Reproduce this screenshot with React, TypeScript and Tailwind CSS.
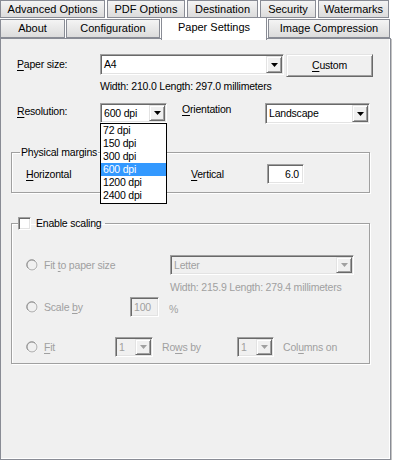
import React from "react";

const sunken =
  "border border-t-[#a0a0a0] border-l-[#a0a0a0] border-b-white border-r-white shadow-[inset_1px_1px_0_#696969,inset_-1px_-1px_0_#e3e3e3]";
const raised =
  "border border-t-[#e3e3e3] border-l-[#e3e3e3] border-b-[#696969] border-r-[#696969] shadow-[inset_1px_1px_0_#fff,inset_-1px_-1px_0_#a0a0a0]";

function Arrow({ disabled }: { disabled?: boolean }) {
  return (
    <div className={`w-[16px] m-[1px] flex items-center justify-center bg-[#f0f0f0] ${raised}`}>
      <svg width="7" height="4" viewBox="0 0 7 4">
        <path d="M0 0h7L3.5 4z" fill={disabled ? "#a0a0a0" : "#000"} />
      </svg>
    </div>
  );
}

function Combo({
  className,
  value,
  disabled,
}: {
  className: string;
  value: string;
  disabled?: boolean;
}) {
  return (
    <div className={`flex ${sunken} ${disabled ? "bg-[#f0f0f0]" : "bg-white"} ${className}`}>
      <div
        className={`flex-1 flex items-center pl-[3px] ${disabled ? "text-[#a0a0a0]" : "text-black"}`}
      >
        {value}
      </div>
      <Arrow disabled={disabled} />
    </div>
  );
}

function U({ children }: { children: React.ReactNode }) {
  return <span className="underline underline-offset-[2px]">{children}</span>;
}

function Radio() {
  return (
    <svg width="12" height="12" viewBox="0 0 12 12" className="shrink-0">
      <circle cx="6" cy="6" r="5.5" fill="#f0f0f0" stroke="#ffffff" />
      <circle cx="6" cy="6" r="5" fill="#f0f0f0" stroke="#a8a8a8" strokeWidth="1" />
      <path d="M2.2 9.2A4.2 4.2 0 0 1 9.2 2.2" fill="none" stroke="#909090" strokeWidth="1" />
    </svg>
  );
}

export default function App() {
  const tab =
    "h-full flex items-center justify-center border border-[#898c95] bg-[linear-gradient(#f4f4f4,#dcdcdc)] text-black";
  return (
    <div className="relative w-[394px] h-[460px] bg-white font-['Liberation_Sans',Arial,sans-serif] text-[11px] leading-[13px] text-black overflow-hidden">
      {/* Tab row 1 */}
      <div className="flex h-[18px] gap-[2px]">
        <div className={`${tab} w-[105px]`}>Advanced Options</div>
        <div className={`${tab} w-[78px]`}>PDF Options</div>
        <div className={`${tab} w-[71px]`}>Destination</div>
        <div className={`${tab} w-[56px]`}>Security</div>
        <div className={`${tab} w-[71px]`}>Watermarks</div>
      </div>
      {/* Tab row 2 */}
      <div className="flex h-[19px] mt-[1px] gap-[1px] items-end relative z-10">
        <div className={`${tab} w-[65px] h-[18px]`}>About</div>
        <div className={`${tab} w-[94px] h-[18px]`}>Configuration</div>
        <div className="w-[106px] h-[23px] mb-[-2px] bg-white border border-b-0 border-[#898c95] flex items-start justify-center pt-[3px] -mt-[4px]">
          Paper Settings
        </div>
        <div className={`${tab} w-[122px] h-[18px]`}>Image Compression</div>
      </div>
      {/* Panel */}
      <div className="w-[391px] h-[422px] bg-[#f0f0f0] border border-[#898c95] shadow-[inset_-1px_-1px_0_#fff,1px_1px_0_#c4c4c4] pt-[15px] text-[10.5px] tracking-[-0.2px]">
        {/* Paper size row */}
        <div className="flex items-start">
          <div className="w-[99px] pl-[16px] pt-[4px]">
            <U>P</U>aper size:
          </div>
          <Combo className="w-[184px] h-[21px]" value="A4" />
          <div className={`ml-[2px] w-[87px] h-[23px] flex items-center justify-center bg-[#f0f0f0] ${raised}`}>
            <U>C</U>ustom
          </div>
        </div>
        <div className="ml-[99px] mt-[3px]">Width: 210.0 Length: 297.0 millimeters</div>
        {/* Resolution row */}
        <div className="flex items-start mt-[10px]">
          <div className="w-[99px] pl-[16px] pt-[2px]">
            <U>R</U>esolution:
          </div>
          <Combo className="w-[67px] h-[20px]" value="600 dpi" />
          <div className="w-[98px] pl-[15px]">
            <U>O</U>rientation
          </div>
          <Combo className="w-[105px] h-[21px]" value="Landscape" />
        </div>
        {/* Physical margins */}
        <fieldset className="ml-[10px] mt-[22px] w-[359px] h-[47px] border border-[#a0a0a0] shadow-[1px_1px_0_#fff,inset_1px_1px_0_#fff] px-[14px]">
          <legend className="px-[1px] ml-[-6px]">Physical margins</legend>
          <div className="flex items-center mt-[5px]">
            <div className="w-[165px]">
              <U>H</U>orizontal
            </div>
            <div className="w-[76px]">
              <U>V</U>ertical
            </div>
            <div className={`w-[37px] h-[20px] bg-white text-right pr-[4px] flex items-center justify-end ${sunken}`}>
              6.0
            </div>
          </div>
        </fieldset>
        {/* Enable scaling */}
        <fieldset className="ml-[10px] mt-[24px] w-[359px] h-[147px] border border-[#a0a0a0] shadow-[1px_1px_0_#fff,inset_1px_1px_0_#fff] text-[#a0a0a0]">
          <legend className="ml-[6px] pr-[3px] flex items-center text-black">
            <div className={`w-[13px] h-[13px] bg-white ${sunken}`} />
            <span className="ml-[5px]">Enable scaling</span>
          </legend>
          <div className="flex items-center mt-[25px]">
            <div className="w-[14px]" />
            <Radio />
            <span className="ml-[6px] w-[126px]">
              Fit <U>t</U>o paper size
            </span>
            <Combo className="w-[184px] h-[20px]" value="Letter" disabled />
          </div>
          <div className="ml-[158px] mt-[6px]">Width: 215.9 Length: 279.4 millimeters</div>
          <div className="flex items-center mt-[3px]">
            <div className="w-[14px]" />
            <Radio />
            <span className="ml-[6px] w-[86px]">
              Scale <U>b</U>y
            </span>
            <div className={`w-[29px] h-[20px] bg-[#f0f0f0] flex items-center pl-[3px] ${sunken}`}>100</div>
            <span className="ml-[10px] mt-[4px]">%</span>
          </div>
          <div className="flex items-center mt-[20px]">
            <div className="w-[14px]" />
            <Radio />
            <span className="ml-[6px] w-[71px]">
              <U>F</U>it
            </span>
            <Combo className="w-[38px] h-[20px]" value="1" disabled />
            <span className="ml-[9px] w-[75px]">
              Ro<U>w</U>s by
            </span>
            <Combo className="w-[37px] h-[20px]" value="1" disabled />
            <span className="ml-[9px]">
              Col<U>u</U>mns on
            </span>
          </div>
        </fieldset>
      </div>
      {/* Dropdown list overlay */}
      <div className="absolute left-[100px] top-[123px] w-[67px] h-[81px] bg-white border border-[#000] flex flex-col text-[10.5px] tracking-[-0.2px]">
        {["72 dpi", "150 dpi", "300 dpi", "600 dpi", "1200 dpi", "2400 dpi"].map((d) => (
          <div
            key={d}
            className={`h-[13px] pl-[2px] leading-[13px] ${d === "600 dpi" ? "bg-[#3399ff] text-white" : ""}`}
          >
            {d}
          </div>
        ))}
      </div>
    </div>
  );
}
